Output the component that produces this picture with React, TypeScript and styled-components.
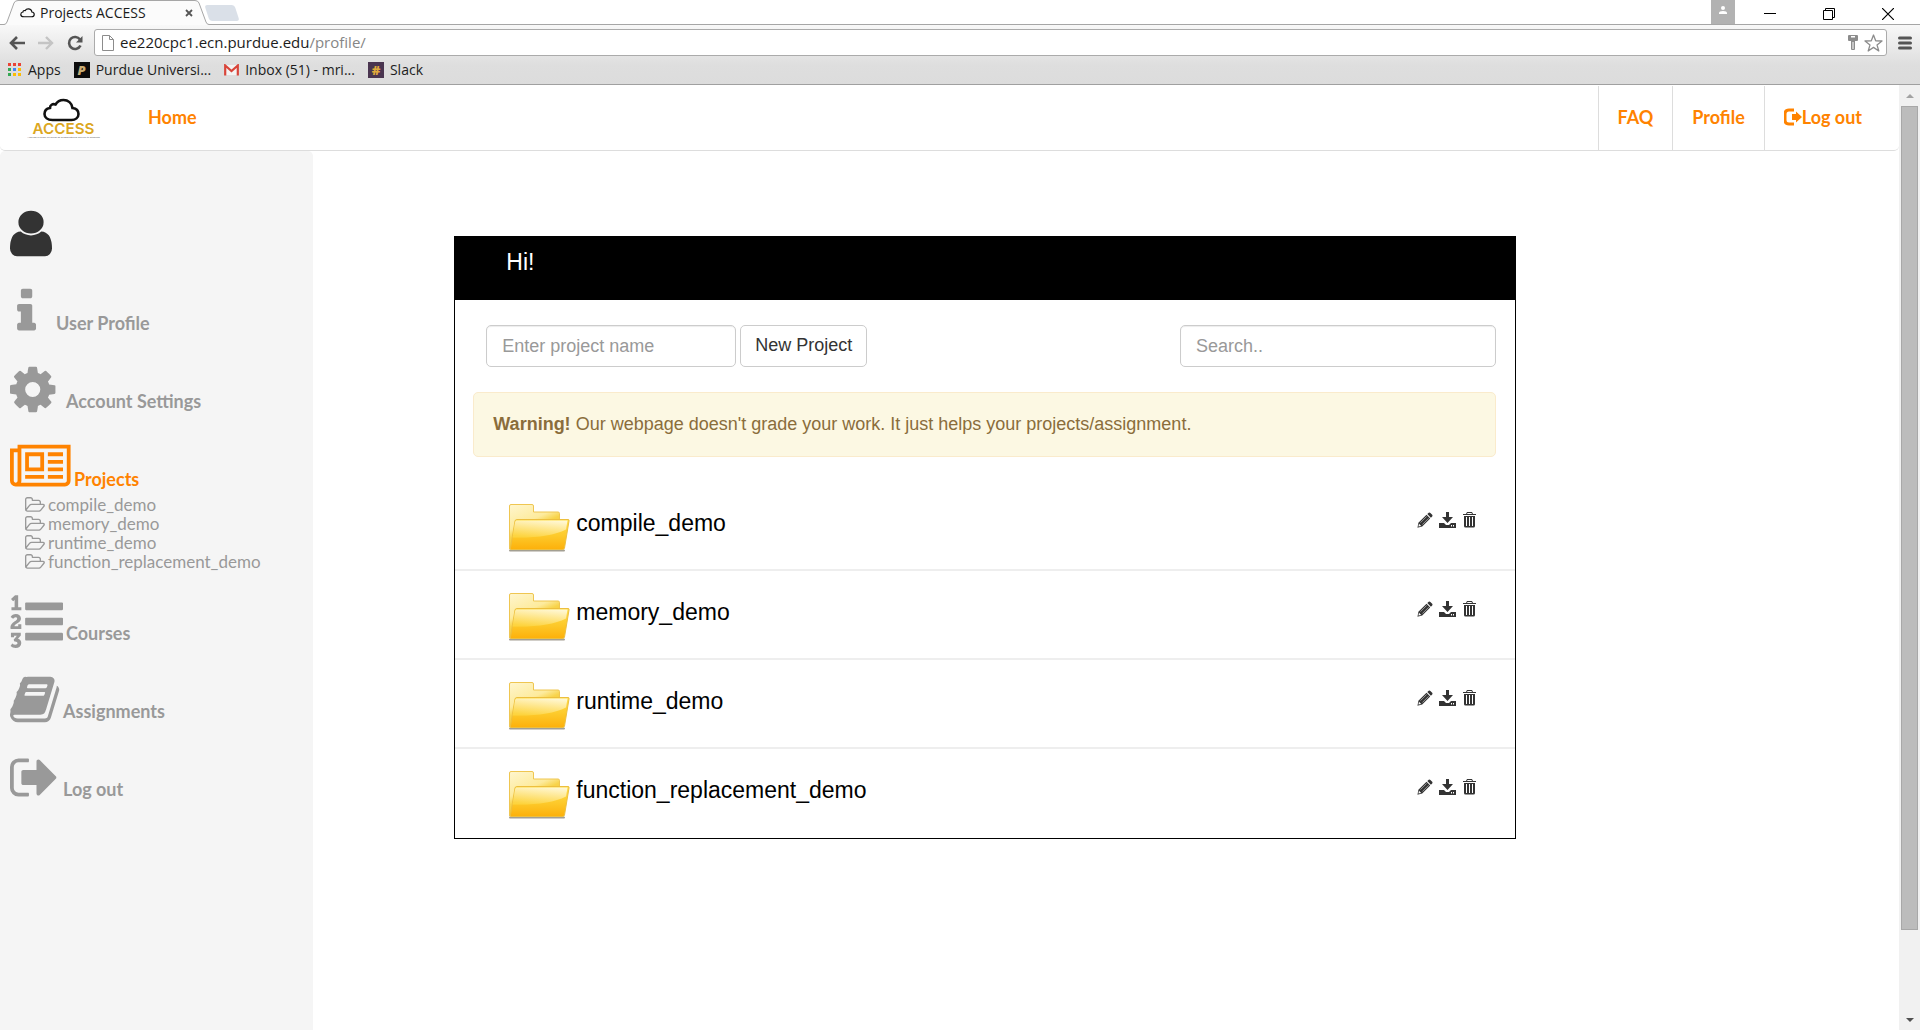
import React, { useId } from "react";
import styled, { createGlobalStyle, css } from "styled-components";

const GlobalStyle = createGlobalStyle`
  *, *::before, *::after { box-sizing: border-box; }
  body {
    margin: 0;
    background: #fff;
    color: #333;
    font: 18px/25px "Liberation Sans", Arial, sans-serif;
  }
  button, input { font: inherit; }
  svg { display: block; flex: none; }
  ul { list-style: none; margin: 0; padding: 0; }
`;

const orange = "#ff8300";
const grey = "#999";

/* ---------- browser window ---------- */

const Window = styled.div`
  display: flex;
  flex-direction: column;
  min-height: 100vh;
`;

const Chrome = styled.header`
  color: #1c1c1c;
  font: 14px/20px "Open Sans", "Noto Sans", sans-serif;
`;

const TabStrip = styled.div`
  display: flex;
  height: 25px;
  padding-left: 4px;
  border-bottom: 1px solid #a6a6a6;
`;

const Tab = styled.div`
  display: flex;
  height: 25px;
`;

const TabFace = styled.div`
  display: flex;
  align-items: center;
  width: 177px;
  padding: 0 2px 1px;
  border-top: 1px solid #a6a6a6;
  background: #fbfbfb;
`;

const TabTitle = styled.span`
  flex: 1;
  margin-left: 5px;
  white-space: nowrap;
`;

const PlainButton = styled.button`
  display: flex;
  align-items: center;
  justify-content: center;
  padding: 0;
  border: 0;
  background: none;
  color: inherit;
  cursor: pointer;
`;

const NewTab = styled(PlainButton)`
  width: 30px;
  height: 16px;
  margin: 5px 0 0 -2px;
  border-radius: 3px;
  background: #dae0e8;
  transform: skewX(18deg);
`;

const WindowControls = styled.div`
  display: flex;
  margin: 0 3px 0 auto;
`;

const Account = styled(PlainButton)`
  width: 24px;
  height: 24px;
  margin-right: 5px;
  padding-bottom: 4px;
  background: #b2b2b2;
`;

const WindowButton = styled(PlainButton)`
  width: 59px;
  height: 25px;
  padding-top: 3px;
`;

const Bars = styled.div`
  background: linear-gradient(#f8f8f8, #dedede 40px, #dcdcdc);
  border-bottom: 1px solid #a0a0a0;
`;

const AddressRow = styled.div`
  display: flex;
  align-items: center;
  gap: 11px;
  padding: 4px 8px 0 9px;
`;

const NavButtons = styled.div`
  display: flex;
  gap: 13px;
`;

const Omnibox = styled.div`
  display: flex;
  flex: 1;
  align-items: center;
  gap: 6px;
  height: 27px;
  padding: 0 3px 0 7px;
  border: 1px solid #ababab;
  border-radius: 3px;
  background: #fff;
`;

const Url = styled.div`
  flex: 1;
  padding-bottom: 2px;
  outline: 0;
  font-size: 15px;
  span { color: #868686; }
`;

const Bookmarks = styled.nav`
  display: flex;
  align-items: center;
  gap: 13px;
  height: 28px;
  padding-left: 8px;
`;

const Bookmark = styled.a`
  display: flex;
  align-items: center;
  gap: 6px;
  color: inherit;
  text-decoration: none;
`;

const Tile = styled.span<{ $bg: string; $fg: string }>`
  display: flex;
  align-items: center;
  justify-content: center;
  width: 16px;
  height: 16px;
  background: ${(p) => p.$bg};
  color: ${(p) => p.$fg};
  font: 800 13px/16px "Open Sans", sans-serif;
`;

/* ---------- page frame ---------- */

const Viewport = styled.div`
  display: flex;
  flex: 1;
`;

const Page = styled.div`
  display: flex;
  flex: 1;
  flex-direction: column;
`;

const ScrollTrack = styled.div`
  display: flex;
  flex-direction: column;
  align-items: center;
  width: 21px;
  background: #f1f1f1;
`;

const ScrollArrow = styled(PlainButton)`
  width: 21px;
  height: 21px;
`;

const ScrollThumb = styled.div`
  flex: 824;
  width: 17px;
  border: 1px solid #a8a8a8;
  background: #bcbcbc;
`;

const ScrollRest = styled.div`
  flex: 79;
`;

const NavBar = styled.nav`
  display: flex;
  height: 66px;
  padding-right: 18px;
  border-bottom: 1px solid #ddd;
  border-radius: 5px;
`;

const Brand = styled.a`
  padding: 12px 28px 0 26px;
`;

const NavLink = styled.a<{ $ruled?: boolean }>`
  display: flex;
  align-items: center;
  height: 64px;
  margin-top: 1px;
  padding: 0 19px 2px;
  color: ${orange};
  font: bold 18px/24px Lato, sans-serif;
  text-decoration: none;
  ${(p) => p.$ruled && css`border-left: 1px solid #ddd;`}
`;

const NavRight = styled.div`
  display: flex;
  margin-left: auto;
`;

const Columns = styled.div`
  display: flex;
  flex: 1;
`;

/* ---------- sidebar ---------- */

const Sidebar = styled.aside`
  flex: 0 0 16.5%;
  padding: 56px 10px 0;
  border-radius: 5px 5px 0 0;
  background: #f5f5f5;
`;

const Avatar = styled.div`
  margin-bottom: 25px;
  color: #333;
`;

const MenuItem = styled.li<{ $open?: boolean }>`
  margin-bottom: ${(p) => (p.$open ? 24 : 25)}px;
`;

const MenuLink = styled.a<{ $active?: boolean }>`
  display: flex;
  align-items: flex-end;
  gap: 3px;
  color: ${(p) => (p.$active ? orange : grey)};
  font: bold 18px/30px Lato, sans-serif;
  text-decoration: none;
`;

const SubMenu = styled.ul`
  padding: 1px 0 0 15px;
`;

const SubLink = styled.a`
  display: flex;
  align-items: center;
  gap: 3px;
  color: ${grey};
  font: 17px/19px Lato, sans-serif;
  text-decoration: none;
`;

/* ---------- projects panel ---------- */

const Main = styled.main`
  display: grid;
  flex: 1;
  grid-template-columns: 141fr 1062fr 383fr;
  align-items: start;
  padding-top: 85px;
`;

const Panel = styled.section`
  grid-column: 2;
  padding-bottom: 2px;
  border: 1px solid #000;
`;

const Greeting = styled.h1`
  height: 63px;
  margin: 0;
  padding: 12px 51px;
  background: #000;
  color: #fff;
  font-size: 23px;
  font-weight: normal;
  line-height: 26px;
`;

const Tools = styled.div`
  display: flex;
  justify-content: space-between;
  padding: 25px 19px 25px 31px;
`;

const NewProject = styled.form`
  display: flex;
  gap: 4px;
`;

const control = css`
  height: 42px;
  border: 1px solid #ccc;
  border-radius: 5px;
  background: #fff;
`;

const TextBox = styled.input<{ $width: number }>`
  ${control}
  width: ${(p) => p.$width}px;
  padding: 0 15px;
  box-shadow: inset 0 1px 1px rgba(0, 0, 0, 0.075);
  color: #555;
  &::placeholder { color: ${grey}; opacity: 1; }
`;

const CreateButton = styled.button`
  ${control}
  padding: 0 14px 2px;
  color: #333;
`;

const Alert = styled.div`
  margin: 0 19px 25px 18px;
  padding: 19px;
  border: 1px solid #faebcc;
  border-radius: 5px;
  background: #fcf8e3;
  color: #8a6d3b;
`;

const Row = styled.li`
  display: flex;
  align-items: flex-start;
  padding: 21px 38px 16px 53px;
  & + & { border-top: 2px solid #eee; }
`;

const FolderLink = styled.a`
  display: flex;
  gap: 6px;
  color: #000;
  font-size: 23px;
  line-height: 40px;
  text-decoration: none;
`;

const Actions = styled.div`
  display: flex;
  gap: 6px;
  margin: 9px 0 0 auto;
  color: #333;
`;

/* ---------- icons ---------- */

type Shape = { d: string; x: number; w: number; units?: number };

const shapes: Record<string, Shape> = {
  user: {
    x: 256,
    w: 42,
    units: 1280,
    d: "M1536 1399q0 109-62.5 187t-150.5 78h-854q-88 0-150.5-78t-62.5-187q0-85 8.5-160.5t31.5-152 58.5-131 94-89 134.5-34.5q131 128 313 128t313-128q76 0 134.5 34.5t94 89 58.5 131 31.5 152 8.5 160.5zm-256-887q0 159-112.5 271.5t-271.5 112.5-271.5-112.5-112.5-271.5 112.5-271.5 271.5-112.5 271.5 112.5 112.5 271.5z",
  },
  info: {
    x: 336,
    w: 43,
    d: "M1216 1344v128q0 26-19 45t-45 19h-512q-26 0-45-19t-19-45v-128q0-26 19-45t45-19h64v-384h-64q-26 0-45-19t-19-45v-128q0-26 19-45t45-19h384q26 0 45 19t19 45v576h64q26 0 45 19t19 45zm-128-1152v192q0 26-19 45t-45 19h-256q-26 0-45-19t-19-45v-192q0-26 19-45t45-19h256q26 0 45 19t19 45z",
  },
  cog: {
    x: 128,
    w: 53,
    d: "M1152 896q0-106-75-181t-181-75-181 75-75 181 75 181 181 75 181-75 75-181zm512-109v222q0 12-8 23t-20 13l-185 28q-19 54-39 91 35 50 107 138 10 12 10 25t-9 23q-27 37-99 108t-94 71q-12 0-26-9l-138-108q-44 23-91 38-16 136-29 186-7 28-36 28h-222q-14 0-24.5-8.5t-11.5-21.5l-28-184q-49-16-90-37l-141 107q-10 9-25 9-14 0-25-11-126-114-165-168-7-10-7-23 0-12 8-23 15-21 51-66.5t54-70.5q-27-50-41-99l-183-27q-13-2-21-12.5t-8-23.5v-222q0-12 8-23t19-13l186-28q14-46 39-92-40-57-107-138-10-12-10-24 0-10 9-23 26-36 98.5-107.5t94.5-71.5q13 0 26 10l138 107q44-23 91-38 16-136 29-186 7-28 36-28h222q14 0 24.5 8.5t11.5 21.5l28 184q49 16 90 37l142-107q9-9 24-9 13 0 25 10 129 119 165 170 7 8 7 22 0 12-8 23-15 21-51 66.5t-54 70.5q26 50 41 98l183 28q13 2 21 12.5t8 23.5z",
  },
  newspaper: {
    x: 0,
    w: 61,
    d: "M1024 512h-384v384h384v-384zm128 640v128h-640v-128h640zm0-768v640h-640v-640h640zm640 768v128h-512v-128h512zm0-256v128h-512v-128h512zm0-256v128h-512v-128h512zm0-256v128h-512v-128h512zm-1536 960v-960h-128v960q0 26 19 45t45 19 45-19 19-45zm1664 0v-1088h-1536v1088q0 33-11 64h1483q26 0 45-19t19-45zm128-1216v1216q0 80-56 136t-136 56h-1664q-80 0-136-56t-56-136v-1088h256v-128h1792z",
  },
  list: {
    x: 0,
    w: 53,
    d: "M381 1620q0 80-54.5 126t-135.5 46q-106 0-172-66l57-88q49 45 106 45 29 0 50.5-14.5t21.5-42.5q0-64-105-56l-26-56q8-10 32.5-43.5t42.5-54 37-38.5v-1q-16 0-48.5 1t-48.5 1v53h-106v-152h333v88l-95 115q51 12 81 49t30 88zm2-627v159h-362q-6-36-6-54 0-51 23.5-93t56.5-68 66-47.5 56.5-43.5 23.5-45q0-25-14.5-38.5t-39.5-13.5q-46 0-81 58l-85-59q24-51 71.5-79.5t105.5-28.5q73 0 123 41.5t50 112.5q0 50-34 91.5t-75 64.5-75.5 50.5-35.5 52.5h127v-60h105zm1409 319v192q0 13-9.5 22.5t-22.5 9.5h-1216q-13 0-22.5-9.5t-9.5-22.5v-192q0-14 9-23t23-9h1216q13 0 22.5 9.5t9.5 22.5zm-1408-899v99h-335v-99h107q0-41 .5-121.5t.5-121.5v-12h-2q-8 17-50 54l-71-76 136-127h106v404h108zm1408 387v192q0 13-9.5 22.5t-22.5 9.5h-1216q-13 0-22.5-9.5t-9.5-22.5v-192q0-14 9-23t23-9h1216q13 0 22.5 9.5t9.5 22.5zm0-512v192q0 13-9.5 22.5t-22.5 9.5h-1216q-13 0-22.5-9.5t-9.5-22.5v-192q0-13 9.5-22.5t22.5-9.5h1216q13 0 22.5 9.5t9.5 22.5z",
  },
  book: {
    x: 64,
    w: 50,
    d: "M1703 478q40 57 18 129l-275 906q-19 64-76.5 107.5t-122.5 43.5h-923q-77 0-148.5-53.5t-99.5-131.5q-24-67-2-127 0-4 3-27t4-37q1-8-3-21.5t-3-19.5q2-11 8-21t16.5-23.5 16.5-23.5q23-38 45-91.5t30-91.5q3-10 .5-30t-.5-28q3-11 17-28t17-23q21-36 42-92t25-90q1-9-2.5-32t.5-28q4-13 22-30.5t22-22.5q19-26 42.5-84.5t27.5-96.5q1-8-3-25.5t-2-26.5q2-8 9-18t18-23 17-21q8-12 16.5-30.5t15-35 16-36 19.5-32 26.5-23.5 36-11.5 47.5 5.5l-1 3q38-9 51-9h761q74 0 114 56t18 130l-274 906q-36 119-71.5 153.5t-128.5 34.5h-869q-27 0-38 15-11 16-1 43 24 70 144 70h923q29 0 56-15.5t35-41.5l300-987q7-22 5-57 38 15 59 43zm-1064 2q-4 13 2 22.5t20 9.5h608q13 0 25.5-9.5t16.5-22.5l21-64q4-13-2-22.5t-20-9.5h-608q-13 0-25.5 9.5t-16.5 22.5zm-83 256q-4 13 2 22.5t20 9.5h608q13 0 25.5-9.5t16.5-22.5l21-64q4-13-2-22.5t-20-9.5h-608q-13 0-25.5 9.5t-16.5 22.5z",
  },
  signOut: {
    x: 64,
    w: 50,
    d: "M704 1440q0 4 1 20t.5 26.5-3 23.5-10 19.5-20.5 6.5h-320q-119 0-203.5-84.5t-84.5-203.5v-704q0-119 84.5-203.5t203.5-84.5h320q13 0 22.5 9.5t9.5 22.5q0 4 1 20t.5 26.5-3 23.5-10 19.5-20.5 6.5h-320q-66 0-113 47t-47 113v704q0 66 47 113t113 47h312l11.5 1 11.5 3 8 5.5 7 9 2 13.5zm928-544q0 26-19 45l-544 544q-19 19-45 19t-45-19-19-45v-288h-448q-26 0-45-19t-19-45v-384q0-26 19-45t45-19h448v-288q0-26 19-45t45-19 45 19l544 544q19 19 19 45z",
  },
};

const MenuIcon = ({ name }: { name: string }) => {
  const { d, x, w, units = Math.round((w * 1792) / 53) } = shapes[name];
  return (
    <svg width={w} height="53" viewBox={`${x} 0 ${units} 1792`} preserveAspectRatio="none" fill="currentColor" aria-hidden="true">
      <path d={d} />
    </svg>
  );
};

const FolderOutline = () => (
  <svg width="20" height="18" viewBox="64 128 1920 1664" fill="currentColor" aria-hidden="true">
    <path d="M1845 1003q0-35-53-35h-1088q-40 0-85.5 21.5t-71.5 52.5l-294 363q-18 24-18 40 0 35 53 35h1088q40 0 86-22t71-53l294-363q18-22 18-39zm-1141-163h768v-160q0-40-28-68t-68-28h-576q-40 0-68-28t-28-68v-64q0-40-28-68t-68-28h-320q-40 0-68 28t-28 68v853l256-315q44-53 116-87.5t140-34.5zm1269 163q0 62-46 120l-295 363q-43 53-116 87.5t-140 34.5h-1088q-92 0-158-66t-66-158v-960q0-92 66-158t158-66h320q92 0 158 66t66 158v32h544q92 0 158 66t66 158v160h192q54 0 99 24.5t67 70.5q15 32 15 68z" />
  </svg>
);

const Folder = () => {
  const id = useId();
  return (
    <svg width="62" height="50" viewBox="0 0 62 50" aria-hidden="true">
      <defs>
        <linearGradient id={`${id}b`} x1="0" y1="0" x2="0.5" y2="1">
          <stop offset="0" stopColor="#fff6cf" />
          <stop offset="0.45" stopColor="#fdeb9d" />
          <stop offset="0.6" stopColor="#f8d44c" />
          <stop offset="1" stopColor="#f2b91c" />
        </linearGradient>
        <linearGradient id={`${id}f`} x1="0" y1="0" x2="0" y2="1">
          <stop offset="0" stopColor="#ffe04e" />
          <stop offset="0.55" stopColor="#fdc92a" />
          <stop offset="1" stopColor="#fdb00a" />
        </linearGradient>
        <linearGradient id={`${id}s`} x1="0.7" y1="0" x2="0.4" y2="1">
          <stop offset="0" stopColor="#fff7d2" />
          <stop offset="1" stopColor="#fdd43f" />
        </linearGradient>
      </defs>
      <path d="M2 47.5h54" stroke="#8d8878" strokeWidth="2" strokeLinecap="round" opacity="0.8" />
      <path d="M1.5 3q0-1.500 1.500-1.500h21q1.500 0 1.500 1.500v6h24.500q1.500 0 1.500 1.500v35.500h-50z" fill={`url(#${id}b)`} stroke="#efc651" />
      <path d="M8.500 16.500h51.500q1.500 0 1 1.500l-4.500 27q-.5 1.500-2 1.500h-51q-1.500 0-1-1.500l4.500-27q.5-1.500 1.500-1.500z" fill={`url(#${id}f)`} stroke="#edbf3e" />
      <path d="M8.500 17.500h51l-1.500 9q-18 9-53.500 8l2.500-15q.5-2 1.500-2z" fill={`url(#${id}s)`} />
    </svg>
  );
};

const Pencil = () => (
  <svg width="16" height="16" viewBox="0 0 16 16" fill="currentColor" aria-hidden="true">
    <path d="M11.700.8q.9-.6 1.700.1l1.800 1.900q.7.800 0 1.600l-1.300 1.400-3.600-3.700zM9.500 2.700l3.700 3.700-8 8.100-4.900 1.200.2-.3.900-4.600zM2 11.800l-.6 2.800 2.800-.6z" fillRule="evenodd" />
    <path d="M3.500 10.600l6.200-6.200M5.400 12.500l6.200-6.200" stroke="#fff" strokeWidth="0.500" />
  </svg>
);

const Download = () => (
  <svg width="17" height="16" viewBox="0 0 17 16" fill="currentColor" aria-hidden="true">
    <path d="M7 0h3v5h4l-5.500 6-5.500-6h4z" />
    <path d="M0 11h5l2 2h3l2-2h5v5h-17zm12 2v1.500h1v-1.500zm2 0v1.500h1v-1.500z" fillRule="evenodd" />
  </svg>
);

const Trash = () => (
  <svg width="15" height="16" viewBox="0 0 15 16" fill="currentColor" aria-hidden="true">
    <path d="M4 2l1-2h5l1 2h3v1h-13v-1zm1 0h5l-.5-1h-4z" fillRule="evenodd" />
    <path d="M2 4h11v10q0 1.500-1.500 1.500h-8q-1.500 0-1.500-1.500zm2 1v9h1v-9zm3 0v9h1v-9zm3 0v9h1v-9z" fillRule="evenodd" />
  </svg>
);

const LogOutIcon = () => (
  <svg width="18" height="18" viewBox="1 0 18 18" aria-hidden="true">
    <path d="M11 2h-5q-4 0-4 4v6q0 4 4 4h5" fill="none" stroke="currentColor" strokeWidth="3" />
    <path d="M9 6h4v-2.500l6 5.500-6 5.500v-2.500h-4z" fill="currentColor" />
  </svg>
);

const cloud = "M10 21.500C5 21.500 2 19 2 15.500S4.500 10 7.500 9.500C7.500 6.500 10 5 13 6C15 2.500 18 1.500 21 1.500C25.500 1.500 29.500 4.500 30 9.500C33.500 10 36 12 36 15.500S33 21.500 29 21.500Z";

const Logo = () => (
  <svg width="75" height="42" viewBox="0 0 750 420" role="img" aria-label="ACCESS">
    <g transform="translate(165 15) scale(10)">
      <path d={cloud} fill="none" stroke="#111" strokeWidth="2.600" />
    </g>
    <text x="375" y="374" textAnchor="middle" fill="#dca71f" fontFamily="Inter, sans-serif" fontSize="152" fontWeight="600">ACCESS</text>
    <text x="375" y="406" textAnchor="middle" fill="#555" fontFamily="Liberation Sans, sans-serif" fontSize="25">
      Analysis of Code on Cloud as an Educational Service to Students
    </text>
  </svg>
);

const TabEdge = ({ right }: { right?: boolean }) => (
  <svg width="14" height="25" viewBox="0 0 14 25" aria-hidden="true">
    <g transform={right ? "translate(14 0) scale(-1 1)" : undefined}>
      <path d="M0 25V24.500Q2 24.500 3 22L10 3Q11 .5 14 .5V25Z" fill="#fbfbfb" />
      <path d="M0 24.500Q2 24.500 3 22L10 3Q11 .5 14 .5" fill="none" stroke="#a6a6a6" />
    </g>
  </svg>
);

const appColours = ["#ea4335", "#ea4335", "#ea4335", "#34a853", "#4285f4", "#fbbc05", "#34a853", "#fbbc05", "#fbbc05"];

const AppsIcon = () => (
  <svg width="14" height="14" viewBox="0 0 14 14" aria-hidden="true">
    {appColours.map((c, i) => (
      <rect key={i} x={(i % 3) * 5} y={Math.floor(i / 3) * 5} width="3" height="3" fill={c} />
    ))}
  </svg>
);

const Gmail = () => (
  <svg width="15" height="12" viewBox="0 0 15 12" aria-hidden="true">
    <path d="M1 1h13v10h-13z" fill="#f3f3f3" />
    <path d="M1.200 11.500v-10l6.300 5.500 6.300-5.500v10" fill="none" stroke="#d9453a" strokeWidth="2.200" />
  </svg>
);

/* ---------- data ---------- */

const projects = ["compile_demo", "memory_demo", "runtime_demo", "function_replacement_demo"];

const menu = [
  { icon: "info", label: "User Profile" },
  { icon: "cog", label: "Account Settings" },
  { icon: "newspaper", label: "Projects", active: true },
  { icon: "list", label: "Courses" },
  { icon: "book", label: "Assignments" },
  { icon: "signOut", label: "Log out" },
];

/* ---------- parts ---------- */

const BrowserChrome = () => (
  <Chrome>
    <TabStrip>
      <Tab>
        <TabEdge />
        <TabFace>
          <svg width="15" height="12" viewBox="0 0 38 24" aria-hidden="true">
            <path d={cloud} fill="none" stroke="#111" strokeWidth="3" />
          </svg>
          <TabTitle>Projects ACCESS</TabTitle>
          <PlainButton aria-label="Close tab">
            <svg width="8" height="8" viewBox="0 0 8 8" aria-hidden="true">
              <path d="M1 1l6 6M7 1l-6 6" stroke="#555" strokeWidth="1.800" />
            </svg>
          </PlainButton>
        </TabFace>
        <TabEdge right />
      </Tab>
      <NewTab aria-label="New tab" />
      <WindowControls>
        <Account aria-label="Account">
          <svg width="8" height="8" viewBox="0 0 8 8" fill="#fff" aria-hidden="true">
            <circle cx="4" cy="2" r="2" />
            <path d="M0 8v-1q0-2 4-2t4 2v1z" />
          </svg>
        </Account>
        <WindowButton aria-label="Minimise">
          <svg width="12" height="12" viewBox="0 0 12 12" aria-hidden="true">
            <path d="M0 5.500h12" stroke="#000" />
          </svg>
        </WindowButton>
        <WindowButton aria-label="Restore">
          <svg width="12" height="12" viewBox="0 0 12 12" fill="none" stroke="#000" aria-hidden="true">
            <path d="M.5 2.500h9v9h-9zM2.500 2.500v-2h9v9h-2" />
          </svg>
        </WindowButton>
        <WindowButton aria-label="Close">
          <svg width="12" height="12" viewBox="0 0 12 12" aria-hidden="true">
            <path d="M0 0l12 12M12 0l-12 12" stroke="#000" strokeWidth="1.200" />
          </svg>
        </WindowButton>
      </WindowControls>
    </TabStrip>
    <Bars>
      <AddressRow>
        <NavButtons>
          <PlainButton aria-label="Back">
            <svg width="16" height="16" viewBox="0 0 16 16" fill="none" stroke="#555" strokeWidth="2.600" aria-hidden="true">
              <path d="M16 8H3M8 2L2 8l6 6" />
            </svg>
          </PlainButton>
          <PlainButton aria-label="Forward">
            <svg width="16" height="16" viewBox="0 0 16 16" fill="none" stroke="#c4c4c4" strokeWidth="2.400" aria-hidden="true">
              <path d="M0 8h13M8 2l6 6-6 6" />
            </svg>
          </PlainButton>
          <PlainButton aria-label="Reload">
            <svg width="16" height="16" viewBox="0 0 16 16" aria-hidden="true">
              <path d="M13 4.500A6 6 0 1 0 13.500 10.500" fill="none" stroke="#555" strokeWidth="2.600" />
              <path d="M15.500 1v6.500h-6.500z" fill="#555" />
            </svg>
          </PlainButton>
        </NavButtons>
        <Omnibox>
          <svg width="12" height="16" viewBox="0 0 12 16" fill="#fff" stroke="#8c8c8c" aria-hidden="true">
            <path d="M.5.5h7l4 4v11h-11zM7.500.5v4h4" />
          </svg>
          <Url role="textbox" aria-label="Address" contentEditable suppressContentEditableWarning spellCheck={false}>
            ee220cpc1.ecn.purdue.edu<span>/profile/</span>
          </Url>
          <svg width="10" height="16" viewBox="0 0 10 16" aria-hidden="true">
            <path d="M1 0h8q1 0 1 1v4q0 1-1 1h-2v8q0 1-1 1h-2q-1 0-1-1v-8h-2q-1 0-1-1v-4q0-1 1-1zM3 1v1.500h4v-1.500zM4.500 7v7h1v-7z" fill="#8c8c8c" fillRule="evenodd" />
          </svg>
          <svg width="19" height="18" viewBox="0 0 19 18" fill="none" stroke="#8c8c8c" strokeWidth="1.300" strokeLinejoin="round" aria-hidden="true">
            <path d="M9.500 1l2.200 5.800 6.300.2-5 3.900 1.800 6.100-5.300-3.600-5.300 3.600 1.800-6.100-5-3.900 6.300-.2z" />
          </svg>
        </Omnibox>
        <PlainButton aria-label="Menu">
          <svg width="14" height="14" viewBox="0 0 14 14" aria-hidden="true">
            <path d="M1.500 2h11M1.500 7h11M1.500 12h11" stroke="#555" strokeWidth="3" strokeLinecap="round" />
          </svg>
        </PlainButton>
      </AddressRow>
      <Bookmarks aria-label="Bookmarks">
        <Bookmark href="#apps"><AppsIcon />Apps</Bookmark>
        <Bookmark href="#purdue"><Tile $bg="#0c0c0c" $fg="#c9ad74"><i>P</i></Tile>Purdue Universi...</Bookmark>
        <Bookmark href="#inbox"><Gmail />Inbox (51) - mri...</Bookmark>
        <Bookmark href="#slack"><Tile $bg="#4a3550" $fg="#e0a93b">#</Tile>Slack</Bookmark>
      </Bookmarks>
    </Bars>
  </Chrome>
);

const SideMenu = () => (
  <Sidebar>
    <Avatar><MenuIcon name="user" /></Avatar>
    <ul>
      {menu.map((item) => (
        <MenuItem key={item.label} $open={item.active}>
          <MenuLink href="#" $active={item.active}>
            <MenuIcon name={item.icon} />
            {item.label}
          </MenuLink>
          {item.active && (
            <SubMenu>
              {projects.map((name) => (
                <li key={name}>
                  <SubLink href="#"><FolderOutline />{name}</SubLink>
                </li>
              ))}
            </SubMenu>
          )}
        </MenuItem>
      ))}
    </ul>
  </Sidebar>
);

const ProjectsPanel = () => (
  <Panel>
    <Greeting>Hi!</Greeting>
    <Tools>
      <NewProject onSubmit={(e) => e.preventDefault()}>
        <TextBox $width={250} type="text" placeholder="Enter project name" aria-label="Project name" />
        <CreateButton type="submit">New Project</CreateButton>
      </NewProject>
      <TextBox $width={316} type="text" placeholder="Search.." aria-label="Search projects" />
    </Tools>
    <Alert role="alert">
      <strong>Warning!</strong> Our webpage doesn't grade your work. It just helps your projects/assignment.
    </Alert>
    <ul>
      {projects.map((name) => (
        <Row key={name}>
          <FolderLink href="#"><Folder />{name}</FolderLink>
          <Actions>
            <PlainButton aria-label={`Rename ${name}`}><Pencil /></PlainButton>
            <PlainButton aria-label={`Download ${name}`}><Download /></PlainButton>
            <PlainButton aria-label={`Delete ${name}`}><Trash /></PlainButton>
          </Actions>
        </Row>
      ))}
    </ul>
  </Panel>
);

export default function App() {
  return (
    <Window>
      <GlobalStyle />
      <BrowserChrome />
      <Viewport>
        <Page>
          <NavBar>
            <Brand href="#"><Logo /></Brand>
            <NavLink href="#">Home</NavLink>
            <NavRight>
              <NavLink href="#" $ruled>FAQ</NavLink>
              <NavLink href="#" $ruled>Profile</NavLink>
              <NavLink href="#" $ruled><LogOutIcon />Log out</NavLink>
            </NavRight>
          </NavBar>
          <Columns>
            <SideMenu />
            <Main><ProjectsPanel /></Main>
          </Columns>
        </Page>
        <ScrollTrack>
          <ScrollArrow aria-label="Scroll up">
            <svg width="8" height="4" viewBox="0 0 8 4" aria-hidden="true"><path d="M0 4l4-4 4 4z" fill="#a3a3a3" /></svg>
          </ScrollArrow>
          <ScrollThumb />
          <ScrollRest />
          <ScrollArrow aria-label="Scroll down">
            <svg width="8" height="4" viewBox="0 0 8 4" aria-hidden="true"><path d="M0 0l4 4 4-4z" fill="#505050" /></svg>
          </ScrollArrow>
        </ScrollTrack>
      </Viewport>
    </Window>
  );
}
